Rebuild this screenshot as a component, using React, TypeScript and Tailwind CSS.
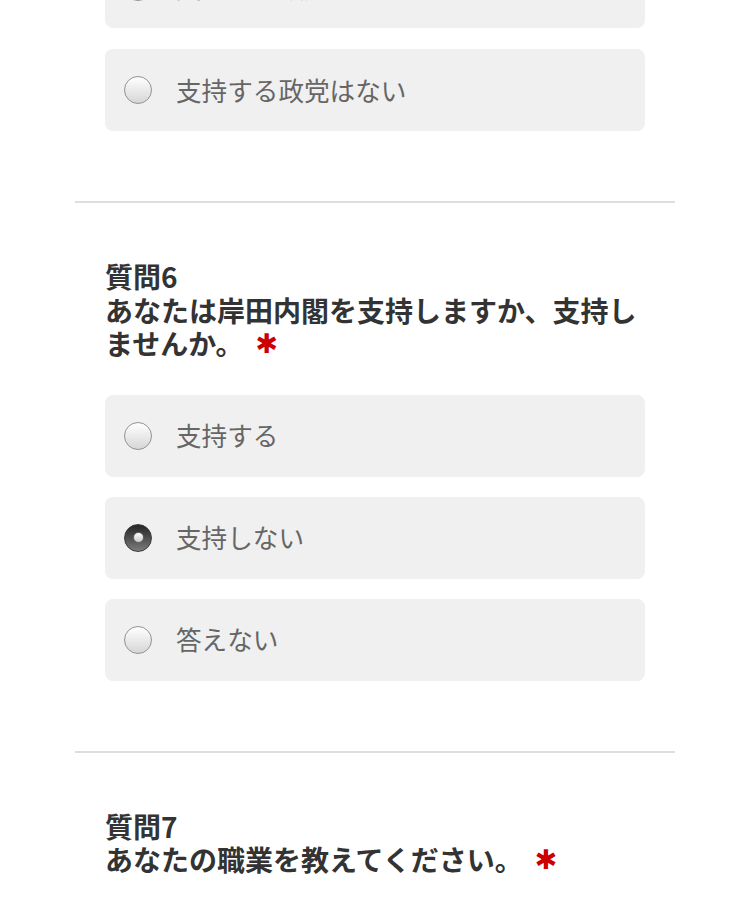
import React from 'react';

const font = { fontFamily: '"Hiragino Sans", "Noto Sans CJK JP", "Noto Sans", sans-serif' };

function Radio({ checked }: { checked?: boolean }) {
  if (checked) {
    return (
      <span className="flex h-[28px] w-[28px] shrink-0 items-center justify-center rounded-full border border-[#3a3a3a] bg-gradient-to-b from-[#262626] to-[#7d7d7d]">
        <span className="h-[11px] w-[11px] rounded-full border border-[#666] bg-gradient-to-b from-white to-[#c8c8c8]" />
      </span>
    );
  }
  return (
    <span className="h-[28px] w-[28px] shrink-0 rounded-full border-[1.5px] border-[#939393] bg-gradient-to-b from-white to-[#d6d6d6]" />
  );
}

function Option({ label, checked }: { label: string; checked?: boolean }) {
  return (
    <div className="flex h-[82px] items-center gap-[24px] rounded-[8px] bg-[#f0f0f0] pl-[19px]">
      <Radio checked={checked} />
      <span className="text-[25.6px] text-[#666]">{label}</span>
    </div>
  );
}

function Heading({ num, text }: { num: string; text: string }) {
  return (
    <h2 className="text-[28px] font-bold leading-[33.5px] text-[#333]">
      {num}
      <br />
      {text}
      <span className="ml-[12px] align-[2px] font-['DejaVu_Sans',sans-serif] text-[27px] leading-none text-[#c00]">✱</span>
    </h2>
  );
}

export default function App() {
  return (
    <div className="h-[901px] w-[750px] overflow-hidden bg-white" style={font}>
      <div className="px-[75px]">
        <div className="px-[30px] pb-[70px]">
          <div className="-mt-[54px] flex flex-col gap-[21px]">
            <Option label="支持する政党" />
            <Option label="支持する政党はない" />
          </div>
        </div>
        <div className="h-[2px] bg-[#dedede]" />
        <div className="px-[30px] pt-[57px] pb-[70px]">
          <Heading num="質問6" text="あなたは岸田内閣を支持しますか、支持しませんか。" />
          <div className="mt-[34px] flex flex-col gap-[20px]">
            <Option label="支持する" />
            <Option label="支持しない" checked />
            <Option label="答えない" />
          </div>
        </div>
        <div className="h-[2px] bg-[#dedede]" />
        <div className="px-[30px] pt-[57px]">
          <Heading num="質問7" text="あなたの職業を教えてください。" />
        </div>
      </div>
    </div>
  );
}
